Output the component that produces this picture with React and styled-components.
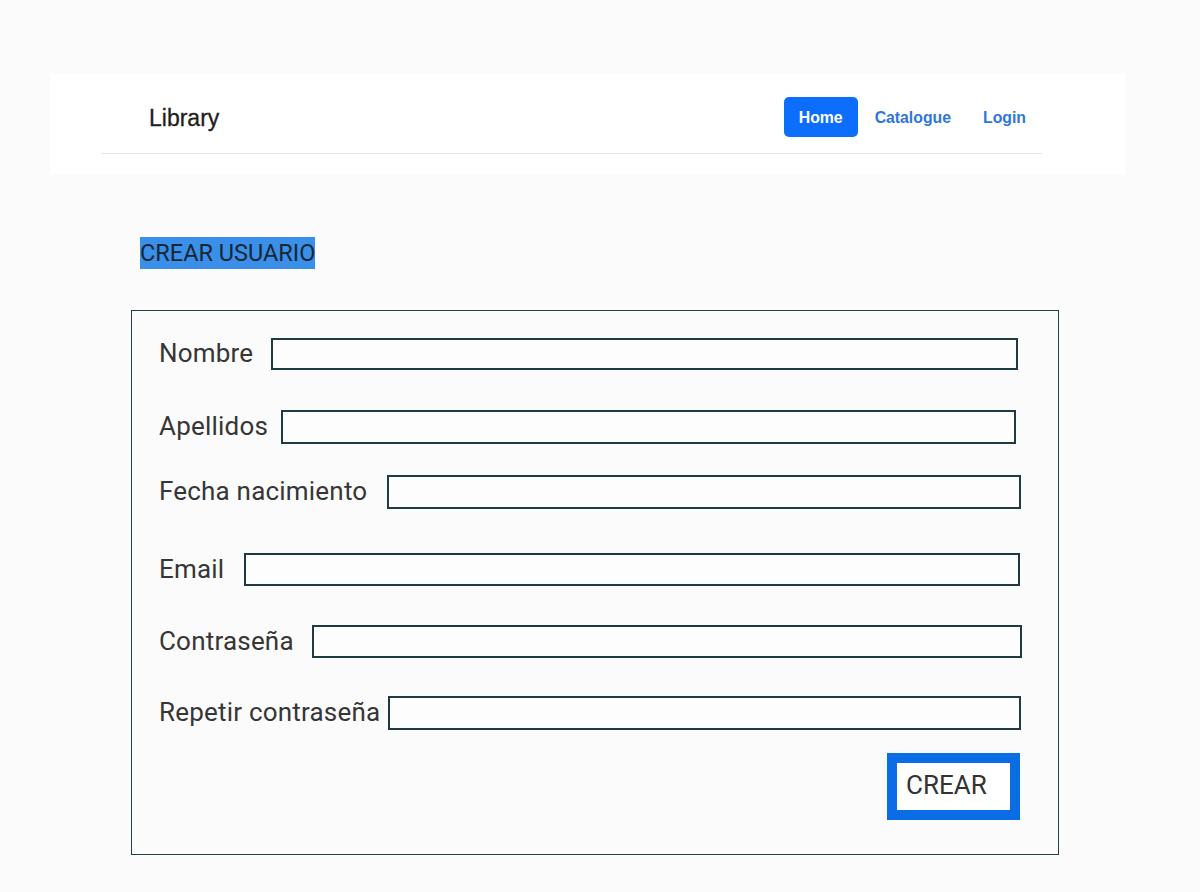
import styled, { createGlobalStyle } from "styled-components"

const GlobalStyle = createGlobalStyle`
  body {
    margin: 0;
    background-color: #fbfbfb;
    font-family: Roboto, "Liberation Sans", sans-serif;
  }
`

const Page = styled.div`
  padding-top: 74px;
  padding-bottom: 37px;
`

const HeaderBar = styled.header`
  margin-left: 50px;
  width: 1075px;
  height: 100px;
  background-color: #ffffff;
`

const NavInner = styled.nav`
  display: flex;
  align-items: center;
  justify-content: space-between;
  margin-left: 51px;
  width: 941px;
  height: 80px;
  border-bottom: 1.5px solid #e6e6e6;
  box-sizing: border-box;
`

const Brand = styled.span`
  font-family: "Liberation Sans", Arial, sans-serif;
  font-size: 23px;
  color: #1e1e1e;
  padding-left: 48px;
  padding-top: 10px;
  -webkit-text-stroke: 0.3px #1e1e1e;
`

const NavLinks = styled.div`
  display: flex;
  align-items: center;
  gap: 8px;
  padding-right: 7px;
  padding-top: 6px;
`

const NavLink = styled.a`
  font-family: "Liberation Sans", Arial, sans-serif;
  font-size: 15.8px;
  font-weight: 700;
  color: ${(p) => (p.$active ? "#ffffff" : "#2f76d9")};
  background-color: ${(p) => (p.$active ? "#0d6efd" : "transparent")};
  border-radius: 5px;
  padding: 12px ${(p) => (p.$active ? "15px" : "9px")} 10px;
  margin-left: ${(p) => (p.$spaced ? "6px" : "0")};
  text-decoration: none;
`

const Main = styled.main`
  padding-left: 131px;
  padding-top: 63px;
`

const Title = styled.h2`
  display: inline-block;
  margin: 0 0 41px 9px;
  font-size: 23.5px;
  font-weight: 400;
  line-height: 32px;
  color: #172636;
  background-color: #3a8fe8;
`

const FormBox = styled.form`
  display: flex;
  flex-direction: column;
  width: 928px;
  height: 545px;
  box-sizing: border-box;
  border: 1.5px solid #233f46;
  padding: 27px 38px 0 27px;
`

const Row = styled.div`
  display: flex;
  align-items: center;
  gap: ${(p) => p.$gap}px;
  margin-bottom: ${(p) => p.$after}px;
  margin-right: ${(p) => p.$right || 0}px;
`

const Label = styled.label`
  font-size: 26px;
  letter-spacing: 0.2px;
  color: #363636;
  white-space: nowrap;
  padding-bottom: 2px;
`

const Input = styled.input`
  flex: 1;
  height: ${(p) => p.$h || 32}px;
  box-sizing: border-box;
  border: 2px solid #1f3a42;
  background: #fdfdfd;
  outline: none;
`

const Actions = styled.div`
  display: flex;
  justify-content: flex-end;
  margin-top: 23px;
`

const SubmitButton = styled.button`
  width: 133px;
  height: 67px;
  box-sizing: border-box;
  border: 10px solid #0a6de6;
  background-color: #ffffff;
  font-family: Roboto, "Liberation Sans", sans-serif;
  font-size: 26px;
  color: #333;
  text-align: left;
  padding: 0 0 3px 9px;
`

const fields = [
  { label: "Nombre", gap: 18, after: 40, h: 32, right: 2 },
  { label: "Apellidos", gap: 13, after: 31, h: 34, right: 4 },
  { label: "Fecha nacimiento", gap: 20, after: 44, h: 34, right: -1 },
  { label: "Email", gap: 20, after: 39, h: 33, right: 0 },
  { label: "Contraseña", gap: 18, after: 38, h: 33, right: -2 },
  { label: "Repetir contraseña", gap: 8, after: 0, h: 34, right: -1 },
]

const App = () => {
  return (
    <Page>
      <GlobalStyle />
      <HeaderBar>
        <NavInner>
          <Brand>Library</Brand>
          <NavLinks>
            <NavLink $active>Home</NavLink>
            <NavLink>Catalogue</NavLink>
            <NavLink $spaced>Login</NavLink>
          </NavLinks>
        </NavInner>
      </HeaderBar>
      <Main>
        <Title>CREAR USUARIO</Title>
        <FormBox onSubmit={(e) => e.preventDefault()}>
          {fields.map((f) => (
            <Row key={f.label} $gap={f.gap} $after={f.after} $right={f.right}>
              <Label>{f.label}</Label>
              <Input $h={f.h} />
            </Row>
          ))}
          <Actions>
            <SubmitButton type="submit">CREAR</SubmitButton>
          </Actions>
        </FormBox>
      </Main>
    </Page>
  )
}

export default App
